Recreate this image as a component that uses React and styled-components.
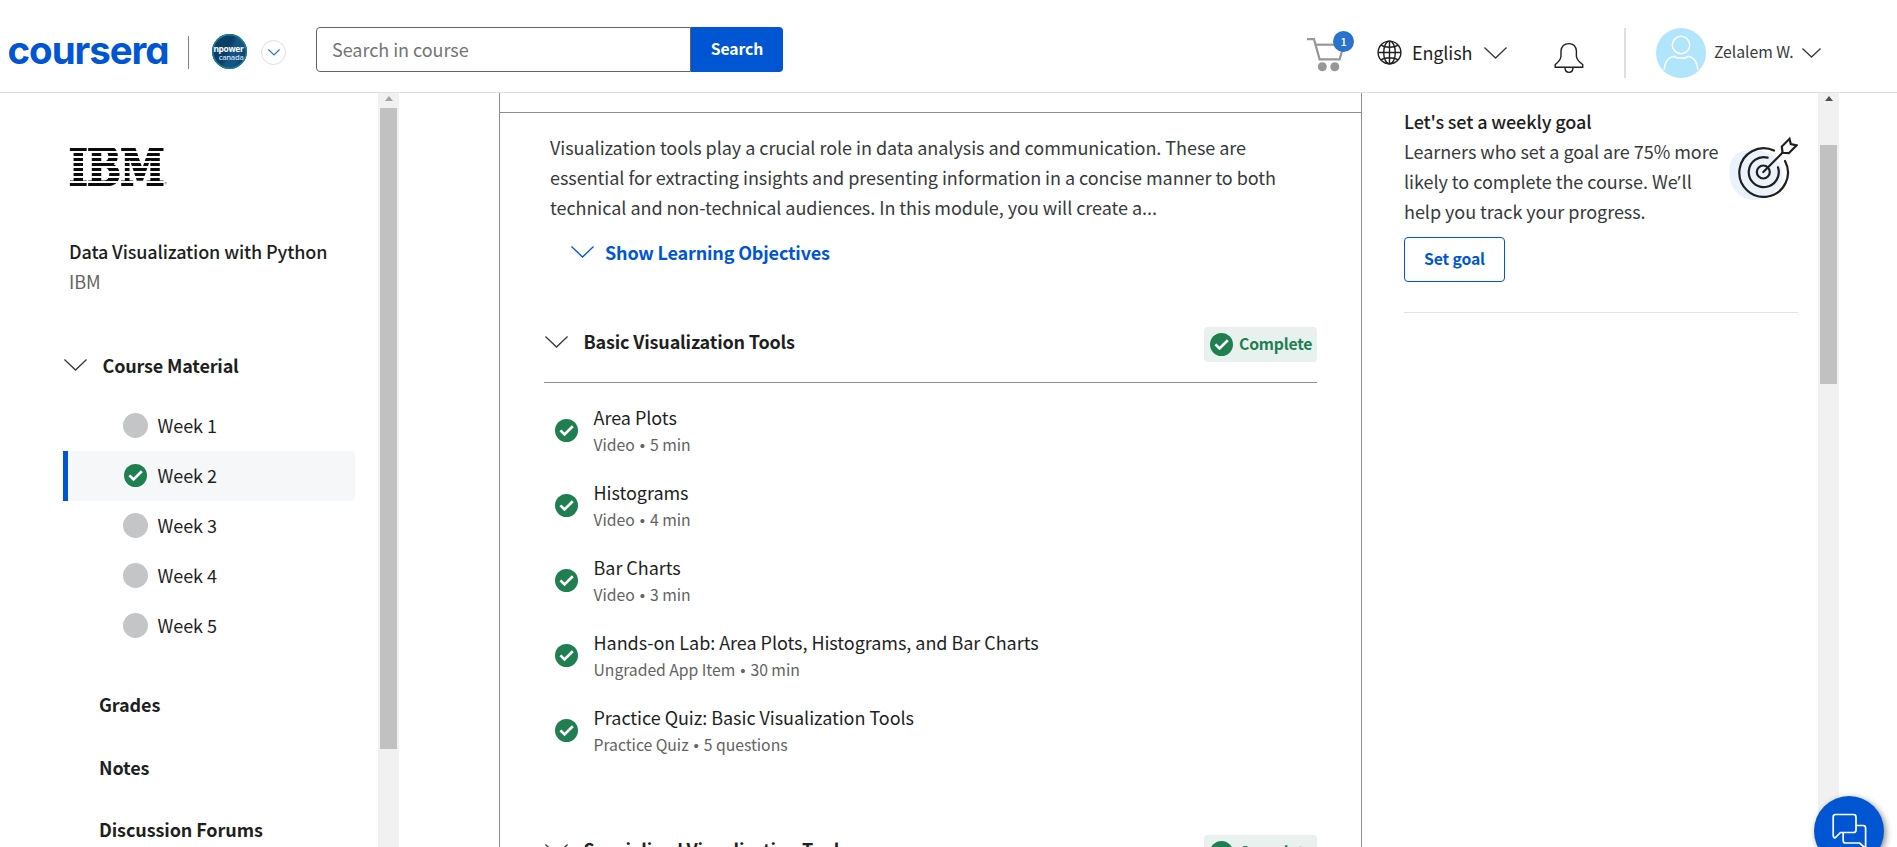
import React from "react";
import styled, { createGlobalStyle } from "styled-components";

const BLUE = "#0056d2";
const GREEN = "#1f7f50";

const GlobalStyle = createGlobalStyle`
  * { box-sizing: border-box; }
  html, body { margin: 0; height: 100%; overflow: hidden; background: #fff; }
  body, button, input {
    font-family: "Noto Sans CJK SC", "Open Sans", sans-serif;
    font-size: 18px;
    line-height: 30px;
    letter-spacing: -0.04px;
    color: #1f1f1f;
  }
  button { padding: 0; cursor: pointer; }
  svg { display: block; flex: none; }
`;

/* ---------- header ---------- */
const Page = styled.div`
  display: flex;
  flex-direction: column;
  height: 847px;
  width: 1897px;
  overflow: hidden;
`;

const Header = styled.header`
  display: flex;
  align-items: flex-start;
  flex: none;
  height: 93px;
  padding-left: 7.5px;
  border-bottom: 1px solid #dfdfe0;
`;

const Wordmark = styled.div`
  width: 180.5px;
  margin-top: 23.5px;
  font-family: Inter, sans-serif;
  font-size: 38.5px;
  font-weight: 700;
  font-feature-settings: "cv11";
  line-height: 52px;
  letter-spacing: -1.05px;
  color: ${BLUE};
`;

const Divider = styled.div`
  width: ${(p) => p.$width || 1}px;
  height: ${(p) => p.$height}px;
  margin: ${(p) => p.$top}px 0 0 ${(p) => p.$left || 0}px;
  background: ${(p) => p.$color};
`;

const PartnerBadge = styled.div`
  display: flex;
  flex-direction: column;
  align-items: flex-end;
  width: 35px;
  height: 35px;
  margin: 34px 0 0 23px;
  padding: 10px 3.5px 0 0;
  border-radius: 50%;
  background: linear-gradient(115deg, #0b3f68 0 45%, #155584 55% 70%, #0d4571 80%);
  box-shadow: inset 0 0 0 1.5px #1b7f95;
  color: #fff;
  font-family: "Open Sans", sans-serif;
  font-size: 8.4px;
  font-weight: 700;
  line-height: 9px;
  letter-spacing: -0.3px;
`;

const PartnerSub = styled.span`
  font-size: 7.6px;
  font-weight: 600;
  line-height: 8px;
  color: #c9dcec;
`;

const RoundToggle = styled.button`
  display: flex;
  align-items: center;
  justify-content: center;
  width: 25px;
  height: 25px;
  margin: 40px 0 0 14px;
  border: 1px solid #dedede;
  border-radius: 50%;
  background: #fff;
`;

const SearchForm = styled.div`
  display: flex;
  width: 467px;
  height: 45px;
  margin: 27px 0 0 30px;
`;

const SearchInput = styled.input`
  width: 375px;
  padding: 0 0 2px 15px;
  border: 1px solid #636363;
  border-radius: 4px 0 0 4px;
  outline: none;
  &::placeholder { color: #757575; opacity: 1; }
`;

const SearchButton = styled.button`
  flex: 1;
  padding-bottom: 2px;
  border: 0;
  border-radius: 0 4px 4px 0;
  background: ${BLUE};
  color: #fff;
  font-size: 15.75px;
  font-weight: 700;
  letter-spacing: -0.12px;
`;

const CartButton = styled.div`
  position: relative;
  margin: 30px 0 0 523px;
`;

const CartCount = styled.span`
  position: absolute;
  top: 1px;
  left: 27px;
  width: 21px;
  height: 21px;
  border-radius: 50%;
  background: #2a73cc;
  color: #fff;
  font-size: 11px;
  font-weight: 500;
  line-height: 21px;
  text-align: center;
`;

const Language = styled.div`
  display: flex;
  align-items: center;
  height: 25px;
  margin: 40px 0 0 21px;
`;

const LanguageName = styled.span`
  width: 72px;
  margin: -2px 0 0 10px;
  letter-spacing: -0.12px;
`;

const BellSlot = styled.div`
  margin: 42px 0 0 47px;
`;

const Account = styled.div`
  display: flex;
  align-items: center;
  height: 50px;
  margin: 28px 0 0 30px;
`;

const AccountName = styled.span`
  width: 88px;
  margin: -2px 0 0 8px;
  font-size: 15.75px;
  color: #373a3c;
`;

/* ---------- body columns ---------- */
const Body = styled.div`
  display: flex;
  flex: 1;
  min-height: 0;
`;

const Sidebar = styled.nav`
  width: 378px;
  padding: 55px 23px 0 63px;
  overflow: hidden;
`;

const IbmLogo = styled.div`
  display: flex;
  align-items: flex-end;
  height: 38px;
  margin-left: 5.5px;
`;

const IbmLetters = styled.span`
  display: block;
  flex: none;
  width: 130px;
  height: 38px;
  font-family: "DejaVu Serif", serif;
  font-weight: 700;
  font-size: 51.5px;
  line-height: 38.6px;
  letter-spacing: -0.3px;
  transform: scaleX(0.77);
  transform-origin: 0 0;
  color: transparent;
  -webkit-text-stroke: 2.6px transparent;
  background: repeating-linear-gradient(#0c0c0c 0 3px, transparent 3px 4.97px);
  background-clip: text;
  -webkit-background-clip: text;
`;

const Registered = styled.span`
  margin-left: -34px;
  font-size: 5px;
  line-height: 5px;
  color: #666;
`;

const CourseTitle = styled.div`
  margin: 50px 0 0 6px;
  font-weight: 500;
  letter-spacing: -0.12px;
`;

const CourseOrg = styled.div`
  margin-left: 6px;
  color: #636363;
`;

const MaterialToggle = styled.div`
  display: flex;
  align-items: center;
  gap: 15.5px;
  margin: 54px 0 21px 0;
  padding-left: 1px;
  font-weight: 700;
  letter-spacing: -0.17px;
`;

const WeekRow = styled.div`
  display: flex;
  align-items: center;
  height: 50px;
  padding-left: ${(p) => (p.$active ? 34 : 39)}px;
  border-left: ${(p) => (p.$active ? `5px solid ${BLUE}` : "0")};
  border-radius: 0 4px 4px 0;
  background: ${(p) => (p.$active ? "#f5f7f8" : "transparent")};
  margin-left: 0;
`;

const WeekStatus = styled.span`
  display: flex;
  align-items: center;
  justify-content: center;
  width: 25px;
  height: 25px;
  margin: -1px 9.5px 0 21px;
  border-radius: 50%;
  background: ${(p) => (p.$done ? "transparent" : "#c4c5c7")};
`;

const WeekName = styled.span`
  margin-top: -2px;
  letter-spacing: -0.05px;
`;

const NavLinks = styled.div`
  margin: 38px 0 0 36px;
  white-space: nowrap;
`;

const NavLink = styled.div`
  height: 62.5px;
  font-weight: 700;
  letter-spacing: -0.1px;
`;

const ScrollTrack = styled.div`
  flex: none;
  width: 21px;
  padding: 3px 2px 0;
  background: #f1f1f1;
`;

const ScrollArrow = styled.div`
  width: 0;
  height: 0;
  margin: 0 auto;
  border: solid transparent;
  border-width: 0 4.5px 5px;
  border-bottom-color: ${(p) => p.$color};
`;

const ScrollThumb = styled.div`
  height: ${(p) => p.$height}px;
  margin-top: ${(p) => p.$offset}px;
  background: #c1c1c1;
`;

const Module = styled.main`
  width: 863px;
  margin-left: 100px;
  border: solid #8c8e92;
  border-width: 0 1px;
  overflow: hidden;
`;

const ModuleTop = styled.div`
  height: 20px;
  border-bottom: 1px solid #8c8e92;
`;

const Summary = styled.p`
  width: 740px;
  margin: 19px 0 15px 50px;
  color: #373a3c;
`;

const Objectives = styled.div`
  display: flex;
  align-items: center;
  gap: 11px;
  padding-left: 71px;
  color: ${BLUE};
  font-weight: 700;
  letter-spacing: -0.18px;
`;

const Section = styled.section`
  margin: ${(p) => p.$gap}px 44px 0 44px;
`;

const SectionHead = styled.div`
  display: flex;
  align-items: flex-start;
  height: 57px;
  padding-left: 1px;
  border-bottom: 1px solid #8c8e92;
`;

const HeadChevron = styled.span`
  margin-top: 10px;
`;

const SectionTitle = styled.h3`
  flex: 1;
  margin: 0 0 0 15.5px;
  font-size: 18px;
  font-weight: 700;
  letter-spacing: -0.17px;
`;

const CompleteBadge = styled.span`
  display: flex;
  align-items: center;
  gap: 6px;
  width: 113px;
  height: 35px;
  margin-top: 1px;
  padding-left: 6px;
  border-radius: 4px;
  background: #e8f1ee;
  color: ${GREEN};
  font-size: 15.75px;
  font-weight: 700;
  letter-spacing: -0.2px;
`;

const BadgeLabel = styled.span`
  margin-top: -2px;
`;

const ItemList = styled.div`
  display: flex;
  flex-direction: column;
  gap: 21px;
  padding: 19px 0 0 11px;
`;

const Item = styled.div`
  display: flex;
  gap: 15.5px;
  height: 54px;
`;

const ItemIcon = styled.span`
  margin-top: 17px;
`;

const ItemMeta = styled.div`
  margin-top: 1px;
  font-size: 15.75px;
  line-height: 23px;
  color: #636363;
`;

const Bullet = styled.span`
  margin: 0 5px;
  font-family: "Liberation Sans", sans-serif;
  font-size: 15px;
  line-height: 1;
`;

const Aside = styled.aside`
  width: 456px;
  padding: 13px 20px 0 42px;
`;

const GoalCard = styled.div`
  display: flex;
  justify-content: space-between;
  height: 131px;
`;

const GoalText = styled.p`
  width: 322px;
  margin: 0;
  white-space: nowrap;
  color: #373a3c;
`;

const GoalTitle = styled.strong`
  font-weight: 500;
  letter-spacing: -0.12px;
  color: #1f1f1f;
`;

const Apostrophe = styled.span`
  margin-right: 1px;
  font-family: "Open Sans", sans-serif;
  line-height: 1;
`;

const GoalArt = styled.div`
  margin: 30px 0 0;
`;

const GoalButton = styled.button`
  width: 101px;
  height: 45px;
  padding-bottom: 2px;
  border: 1px solid ${BLUE};
  border-radius: 4px;
  background: #fff;
  color: ${BLUE};
  font-size: 15.75px;
  font-weight: 700;
  letter-spacing: -0.15px;
`;

const Rule = styled.div`
  height: 1px;
  margin-top: 30px;
  background: #e3e3e3;
`;

const ChatButton = styled.button`
  position: fixed;
  top: 796px;
  left: 1814px;
  display: flex;
  align-items: flex-start;
  justify-content: center;
  width: 70px;
  height: 70px;
  padding-top: 17px;
  border: 0;
  border-radius: 50%;
  background: ${BLUE};
  box-shadow: 2px 2px 6px rgba(0, 0, 0, 0.45);
`;

/* ---------- icons ---------- */
const Chevron = ({ w = 23, h = 12, color = "#373a3c", stroke = 1.4 }) => (
  <svg width={w} height={h} viewBox={`0 0 ${w} ${h}`} fill="none" stroke={color} strokeWidth={stroke}>
    <path d={`M0.4 0.5 L${w / 2} ${h - 1} L${w - 0.4} 0.5`} />
  </svg>
);

const Check = ({ size = 23 }) => (
  <svg width={size} height={size} viewBox="0 0 23 23">
    <circle cx="11.5" cy="11.5" r="11.5" fill={GREEN} />
    <path d="M5.4 11.4 L9.5 15.4 L17.8 7.2" fill="none" stroke="#fff" strokeWidth="2.7" />
  </svg>
);

const Cart = () => (
  <svg width="50" height="44" viewBox="0 0 50 44" fill="none" stroke="#979797" strokeWidth="2.2">
    <path d="M1 9.2 H8 L13.6 29.4 H33.6 L37.4 16" />
    <path d="M9.6 14.7 H30" />
    <circle cx="16.3" cy="36.7" r="4.5" fill="#979797" stroke="none" />
    <circle cx="28.8" cy="36.7" r="4.5" fill="#979797" stroke="none" />
  </svg>
);

const Globe = () => (
  <svg width="25" height="25" viewBox="0 0 25 25" fill="none" stroke="#1f1f1f" strokeWidth="1.4">
    <circle cx="12.5" cy="12.5" r="11.4" />
    <ellipse cx="12.5" cy="12.5" rx="5.8" ry="11.4" />
    <path d="M12.5 1 V24 M1 12.5 H24 M3.8 5.2 C8 8 17 8 21.2 5.2 M3.8 19.8 C8 17 17 17 21.2 19.8" />
  </svg>
);

const Bell = () => (
  <svg width="30" height="32" viewBox="0 0 30 32" fill="none" stroke="#1f1f1f" strokeWidth="1.4">
    <path d="M1.2 25.3 V22.6 C3.8 20.6 6.4 18.4 7 14.5 V9 C7.4 4.4 10.6 1.6 15 1.6 C19.4 1.6 22 4.4 22.4 9 V14.5 C23 18.4 26 20.6 28.7 22.6 V25.3 Z" />
    <path d="M11 25.6 C11 29 12.8 30.4 15 30.4 C17.2 30.4 19 29 19 25.6" />
  </svg>
);

const Avatar = () => (
  <svg width="50" height="50" viewBox="0 0 50 50" fill="none" stroke="#fff" strokeWidth="1.5">
    <circle cx="25" cy="25" r="25" fill="#b0e5fc" stroke="none" />
    <circle cx="25" cy="17" r="8.7" />
    <path d="M8.2 42 C8.6 34 12.6 29.2 18 28.3 C21.5 31 28.5 31 32 28.3 C37.4 29.2 41.4 34 41.8 42" />
  </svg>
);

const Target = () => (
  <svg width="70" height="66" viewBox="0 0 70 66" fill="none" stroke="#1f1f1f" strokeWidth="2.2" strokeLinecap="round">
    <path d="M1.2 34 C2 22 8 14.6 22 14 C40 13 53 22 54.5 38 C55 52 40 64 27 64 C13 64 0.8 54 1.2 34 Z" fill="#eaf2fe" stroke="none" />
    <path d="M46 14.6 A24.3 24.3 0 1 0 57 25" />
    <path d="M39.6 21.6 A15 15 0 1 0 50 31.4" />
    <circle cx="35.3" cy="36" r="6.5" />
    <path d="M35.3 36 L54.4 16.8" />
    <path d="M54.6 16.8 L53.8 10.6 L61.5 2.8 L62.8 8 L68.6 9.4 L60.8 17.2 Z" fill="#fff" />
  </svg>
);

const Chat = () => (
  <svg width="35" height="36" viewBox="0 0 35 36" fill="none" stroke="#fff" strokeWidth="1.7" strokeLinejoin="round">
    <path d="M3.5 1.5 H21.5 Q24 1.5 24 4 V17 Q24 19.5 21.5 19.5 H8.5 L3 25 Q1.2 24.6 1.2 22 V4 Q1.2 1.5 3.5 1.5 Z" />
    <path d="M24 12.5 H31 Q33.6 12.5 33.6 15 V34.5 H32.6 L27.5 30 H13.5 Q11.2 30 11.2 27.5 V20" />
  </svg>
);

/* ---------- content ---------- */
const weeks = ["Week 1", "Week 2", "Week 3", "Week 4", "Week 5"];
const links = ["Grades", "Notes", "Discussion Forums"];
const items = [
  ["Area Plots", "Video", "5 min"],
  ["Histograms", "Video", "4 min"],
  ["Bar Charts", "Video", "3 min"],
  ["Hands-on Lab: Area Plots, Histograms, and Bar Charts", "Ungraded App Item", "30 min"],
  ["Practice Quiz: Basic Visualization Tools", "Practice Quiz", "5 questions"],
];

const SectionHeader = ({ title }) => (
  <SectionHead>
    <HeadChevron><Chevron /></HeadChevron>
    <SectionTitle>{title}</SectionTitle>
    <CompleteBadge>
      <Check />
      <BadgeLabel>Complete</BadgeLabel>
    </CompleteBadge>
  </SectionHead>
);

export default function App() {
  return (
    <Page>
      <GlobalStyle />
      <Header>
        <Wordmark>coursera</Wordmark>
        <Divider $height={33} $top={36} $color="#7d7f83" />
        <PartnerBadge>
          npower
          <PartnerSub>canada</PartnerSub>
        </PartnerBadge>
        <RoundToggle aria-label="Programs"><Chevron w={12} h={7} color="#2a73cc" stroke={1.2} /></RoundToggle>
        <SearchForm>
          <SearchInput placeholder="Search in course" />
          <SearchButton>Search</SearchButton>
        </SearchForm>
        <CartButton>
          <Cart />
          <CartCount>1</CartCount>
        </CartButton>
        <Language>
          <Globe />
          <LanguageName>English</LanguageName>
          <Chevron />
        </Language>
        <BellSlot><Bell /></BellSlot>
        <Divider $width={2} $height={50} $top={28} $left={40} $color="#dfdfe0" />
        <Account>
          <Avatar />
          <AccountName>Zelalem W.</AccountName>
          <Chevron w={19} h={10} />
        </Account>
      </Header>
      <Body>
        <Sidebar>
          <IbmLogo>
            <IbmLetters>IBM</IbmLetters>
            <Registered>®</Registered>
          </IbmLogo>
          <CourseTitle>Data Visualization with Python</CourseTitle>
          <CourseOrg>IBM</CourseOrg>
          <MaterialToggle><Chevron />Course Material</MaterialToggle>
          {weeks.map((week, i) => (
            <WeekRow key={week} $active={i === 1}>
              <WeekStatus $done={i === 1}>{i === 1 && <Check />}</WeekStatus>
              <WeekName>{week}</WeekName>
            </WeekRow>
          ))}
          <NavLinks>
            {links.map((link) => <NavLink key={link}>{link}</NavLink>)}
          </NavLinks>
        </Sidebar>
        <ScrollTrack>
          <ScrollArrow $color="#a3a3a3" />
          <ScrollThumb $height={641} $offset={7} />
        </ScrollTrack>
        <Module>
          <ModuleTop />
          <Summary>
            Visualization tools play a crucial role in data analysis and communication. These are
            essential for extracting insights and presenting information in a concise manner to both
            technical and non-technical audiences. In this module, you will create a...
          </Summary>
          <Objectives><Chevron color={BLUE} />Show Learning Objectives</Objectives>
          <Section $gap={59}>
            <SectionHeader title="Basic Visualization Tools" />
            <ItemList>
              {items.map(([title, kind, length]) => (
                <Item key={title}>
                  <ItemIcon><Check /></ItemIcon>
                  <div>
                    {title}
                    <ItemMeta>{kind}<Bullet>•</Bullet>{length}</ItemMeta>
                  </div>
                </Item>
              ))}
            </ItemList>
          </Section>
          <Section $gap={78}>
            <SectionHeader title="Specialized Visualization Tools" />
          </Section>
        </Module>
        <Aside>
          <GoalCard>
            <GoalText>
              <GoalTitle>Let's set a weekly goal</GoalTitle><br />
              Learners who set a goal are 75% more<br />
              likely to complete the course. We<Apostrophe>’</Apostrophe>ll<br />
              help you track your progress.
            </GoalText>
            <GoalArt><Target /></GoalArt>
          </GoalCard>
          <GoalButton>Set goal</GoalButton>
          <Rule />
        </Aside>
        <ScrollTrack>
          <ScrollArrow $color="#505050" />
          <ScrollThumb $height={239} $offset={44} />
        </ScrollTrack>
      </Body>
      <ChatButton aria-label="Chat"><Chat /></ChatButton>
    </Page>
  );
}
